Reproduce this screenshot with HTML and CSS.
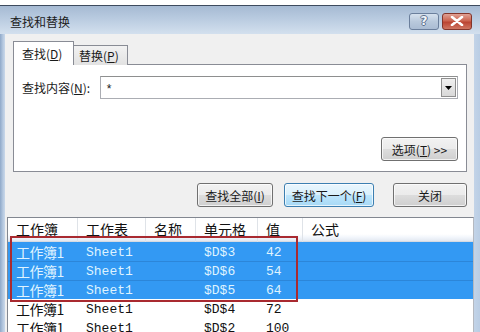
FILE: index.html
```html
<!DOCTYPE html>
<html lang="zh-CN">
<head>
<meta charset="utf-8">
<title>查找和替换</title>
<link rel="stylesheet" href="styles.css">
</head>
<body>
<div class="window">
  <div class="titlebar">
    <span class="title">查找和替换</span>
    <div class="caption-btns">
      <span class="cap-btn help">?</span>
      <span class="cap-btn close">
        <svg width="14" height="10" viewBox="0 0 14 10"><path d="M2 1 L12 9 M12 1 L2 9" stroke="#fff" stroke-width="2.6" stroke-linecap="round"/></svg>
      </span>
    </div>
  </div>
  <div class="client">
    <div class="tabs">
      <div class="tab active">查找(<u>D</u>)</div>
      <div class="tab">替换(<u>P</u>)</div>
    </div>
    <div class="panel">
      <div class="find-row">
        <span class="label">查找内容(<u>N</u>):</span>
        <div class="combo">
          <span class="combo-text">*</span>
          <span class="drop">
            <svg width="7" height="4" viewBox="0 0 7 4"><path d="M0 0 H7 L3.5 4 Z" fill="#000"/></svg>
          </span>
        </div>
      </div>
      <div class="options-row">
        <button class="btn opt">选项(<u>T</u>) &gt;&gt;</button>
      </div>
    </div>
    <div class="actions">
      <button class="btn all">查找全部(<u>I</u>)</button>
      <button class="btn next focused">查找下一个(<u>F</u>)</button>
      <button class="btn close-btn">关闭</button>
    </div>
    <div class="list">
      <div class="list-head">
        <span class="hc c1">工作簿</span>
        <span class="hc c2">工作表</span>
        <span class="hc c3">名称</span>
        <span class="hc c4">单元格</span>
        <span class="hc c5">值</span>
        <span class="hc c6">公式</span>
      </div>
      <div class="row sel"><span class="c1 cjk">工作簿1</span><span class="c2">Sheet1</span><span class="c3"></span><span class="c4">$D$3</span><span class="c5">42</span></div>
      <div class="row sel"><span class="c1 cjk">工作簿1</span><span class="c2">Sheet1</span><span class="c3"></span><span class="c4">$D$6</span><span class="c5">54</span></div>
      <div class="row sel"><span class="c1 cjk">工作簿1</span><span class="c2">Sheet1</span><span class="c3"></span><span class="c4">$D$5</span><span class="c5">64</span></div>
      <div class="row"><span class="c1 cjk">工作簿1</span><span class="c2">Sheet1</span><span class="c3"></span><span class="c4">$D$4</span><span class="c5">72</span></div>
      <div class="row"><span class="c1 cjk">工作簿1</span><span class="c2">Sheet1</span><span class="c3"></span><span class="c4">$D$2</span><span class="c5">100</span></div>
      <div class="redbox"></div>
    </div>
  </div>
</div>
</body>
</html>
```

FILE: styles.css
```css
* { box-sizing: border-box; }
html, body { margin: 0; padding: 0; background: #fff; width: 480px; height: 332px; overflow: hidden; }
body { font-family: "Noto Sans CJK SC", "Noto Sans", sans-serif; font-size: 12px; color: #1a1a1a; }
u { text-decoration: underline; text-underline-offset: 1px; }

.window {
  margin-top: 5px;
  border-top: 1px solid #3d4b5e;
  background: linear-gradient(to right, #8fa9c9 0px, #b6c9e0 3px, #c9d8ea 5px, #c9d8ea 470px, #b9cde4 480px);
  height: 327px;
}
.titlebar {
  height: 28px;
  display: flex;
  align-items: center;
  justify-content: space-between;
  padding-left: 10px;
  background: linear-gradient(to bottom, #a6bad3 0%, #b9cbe0 45%, #d3e0ee 100%);
}
.title { font-size: 12px; color: #1b1b1b; padding-top: 3px; }
.caption-btns { display: flex; gap: 3px; padding-right: 8px; margin-top: 2px; }
.cap-btn {
  width: 30px; height: 17px;
  display: flex; align-items: center; justify-content: center;
  border: 1px solid #6b7f9c; border-radius: 3px;
}
.help {
  background: linear-gradient(to bottom, #d6e1ee, #b9c9dc 50%, #aabcd3);
  color: #f3f6fa; font-family: "DejaVu Sans", sans-serif; font-weight: bold; font-size: 12px;
  text-shadow: 1px 0 0 #5b6f8c, -1px 0 0 #5b6f8c, 0 1px 0 #5b6f8c, 0 -1px 0 #5b6f8c;
}
.close {
  border-color: #83352b;
  background: linear-gradient(to bottom, #e0a194, #cc6450 45%, #bb4533 55%, #cf7662);
}

.client {
  margin: 0 6px 0 5px;
  background: #f0f0f0;
  height: 298px;
  padding-top: 7px;
  display: flex; flex-direction: column;
}
.tabs { display: flex; align-items: flex-end; padding-left: 8px; height: 24px; position: relative; z-index: 1; margin-bottom: -1px; }
.tab {
  height: 20px; padding: 0 8px;
  display: flex; align-items: center;
  border: 1px solid #898c95; border-bottom: none;
  background: linear-gradient(to bottom, #f2f2f2, #e2e2e2);
}
.tab.active { height: 24px; width: 61px; background: #fff; padding: 0 0 0 8px; }
.tab + .tab { border-left: none; width: 54px; padding-left: 5px; }

.panel {
  margin: 0 7px 0 8px;
  height: 108px;
  border: 1px solid #898c95;
  background: #fff;
  padding: 11px 8px 0 8px;
  display: flex; flex-direction: column;
}
.find-row { display: flex; align-items: center; }
.label { width: 78px; }
.combo {
  width: 360px; height: 23px;
  border: 1px solid #abadb3; border-top-color: #8e8f8f;
  display: flex; align-items: center; justify-content: space-between;
  padding-left: 6px;
}
.combo-text { font-family: "Liberation Sans", sans-serif; font-size: 12px; padding-top: 3px; }
.drop {
  width: 15px; height: 19px; margin-right: 1px;
  border: 1px solid #8f8f8f;
  background: linear-gradient(to bottom, #f0f0f0, #d8d8d8);
  display: flex; align-items: center; justify-content: center;
}
.options-row { display: flex; justify-content: flex-end; margin-top: 38px; }

.btn {
  font-family: inherit; font-size: 12px; color: #1a1a1a;
  height: 24px;
  border: 1px solid #707070; border-radius: 3px;
  background: linear-gradient(to bottom, #f2f2f2 0%, #ebebeb 49%, #dddddd 50%, #cfcfcf 100%);
  box-shadow: inset 0 0 0 1px rgba(255,255,255,0.7);
  padding: 0;
}
.opt { width: 77px; }
.actions { display: flex; justify-content: flex-end; padding-right: 7px; margin-top: 11px; }
.all { width: 76px; }
.next { width: 90px; margin-left: 11px; }
.close-btn { width: 74px; margin-left: 19px; }
.focused {
  border-color: #3c7fb1;
  background: linear-gradient(to bottom, #eaf6fd 0%, #d9f0fc 49%, #bee6fd 50%, #a7d9f5 100%);
}

.list {
  position: relative;
  margin: 10px 0 0 2px;
  flex: 1;
  background: #fff;
  border-left: 1px solid #828790;
  border-top: 1px solid #828790;
  border-right: 1px solid #b5b9c0;
  overflow: hidden;
}
.list-head {
  height: 24px;
  display: flex; align-items: center;
  font-size: 14px; color: #111;
  background: linear-gradient(to bottom, #ffffff 0%, #ffffff 70%, #f1f5fb 85%, #e3e8f0 100%);
  border-bottom: 1px solid #d5dae2;
}
.hc { height: 24px; display: flex; align-items: center; border-right: 1px solid #dfe3e8; padding-left: 8px; padding-bottom: 2px; }
.c1 { width: 70px; }
.c2 { width: 68px; }
.c3 { width: 50px; }
.c4 { width: 62px; }
.c5 { width: 45px; }
.c6 { flex: 1; border-right: none; }
.row {
  height: 19px;
  display: flex; align-items: center;
  font-family: "Liberation Mono", "Noto Sans CJK SC", monospace;
  font-size: 13px; color: #111;
  padding-top: 1px;
}
.row span { padding-left: 8px; white-space: nowrap; }
.row .cjk { font-family: "Noto Sans CJK SC", sans-serif; font-size: 14px; letter-spacing: -0.5px; }
.row.sel { background: #3399f3; color: #dff3ff; }
.row.sel + .row.sel { box-shadow: inset 0 1px 0 #2c86d9; }
.redbox {
  position: absolute;
  left: 2px; top: 18px;
  width: 288px; height: 66px;
  border: 2px solid #a92a30;
}
```
